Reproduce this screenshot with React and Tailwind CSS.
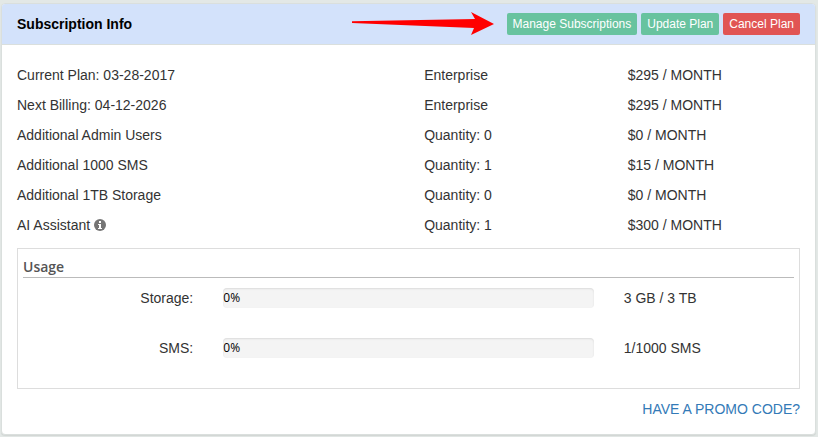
const plans = [
  { name: "Current Plan: 03-28-2017", detail: "Enterprise", price: "$295 / MONTH" },
  { name: "Next Billing: 04-12-2026", detail: "Enterprise", price: "$295 / MONTH" },
  { name: "Additional Admin Users", detail: "Quantity: 0", price: "$0 / MONTH" },
  { name: "Additional 1000 SMS", detail: "Quantity: 1", price: "$15 / MONTH" },
  { name: "Additional 1TB Storage", detail: "Quantity: 0", price: "$0 / MONTH" },
  { name: "AI Assistant", detail: "Quantity: 1", price: "$300 / MONTH", info: true },
];

const usage = [
  { id: "storage", label: "Storage:", percent: 0, value: "3 GB / 3 TB" },
  { id: "sms", label: "SMS:", percent: 0, value: "1/1000 SMS" },
];

function InfoIcon() {
  return (
    <svg viewBox="0 0 12 12" className="inline-block size-3 ml-1 align-[-1px]" aria-hidden="true">
      <circle cx="6" cy="6" r="6" fill="#757575" />
      <path d="M5 2h2v2H5zM4 5h3v4h1v1H4V9h1V6H4z" fill="#fff" />
    </svg>
  );
}

function Arrow() {
  return (
    <svg width="143" height="24" viewBox="0 0 143 24" className="shrink-0 mr-2" aria-hidden="true">
      <path d="M0 9.2L123 7L119 0L142 12L119 23L122 16L0 11z" fill="#f00" />
    </svg>
  );
}

function UsageRow({ id, label, percent, value }) {
  return (
    <div className="grid grid-cols-4 -mx-[15px] h-[50px] leading-5">
      <div id={id} className="px-[15px] text-right">{label}</div>
      <div className="col-span-2 px-[15px]">
        <div
          role="progressbar"
          aria-labelledby={id}
          aria-valuenow={percent}
          className="flex h-5 rounded bg-[#f4f4f4] shadow-[inset_0_1px_2px_rgba(0,0,0,0.1)]"
        >
          <div className="h-full bg-[#68c39f]" style={{ width: `${percent}%` }} />
          <span className="font-['Open_Sans',sans-serif] text-xs font-medium leading-5 text-black">{percent}%</span>
        </div>
      </div>
      <div className="px-[15px]">{value}</div>
    </div>
  );
}

export default function App() {
  return (
    <div className="min-h-screen bg-[#e3e8e6] pt-[3px] pb-0.5 pl-px pr-0.5 font-['Liberation_Sans',Arial,sans-serif] text-sm text-[#333]">
      <section className="rounded border border-[#dadfdd] bg-white shadow-[0_1px_1px_rgba(0,0,0,0.08)]">
        <header className="flex items-center justify-between rounded-t-[3px] border-b border-[#dadfdd] bg-[#d3e2fb] px-[15px] h-[41px]">
          <h1 className="text-sm font-bold text-black">Subscription Info</h1>
          <div className="flex items-center gap-1 text-xs text-white">
            <Arrow />
            <button type="button" className="h-[22px] rounded-[2px] bg-[#68c39f] px-1.5">Manage Subscriptions</button>
            <button type="button" className="h-[22px] rounded-[2px] bg-[#68c39f] px-1.5">Update Plan</button>
            <button type="button" className="h-[22px] rounded-[2px] bg-[#e15554] px-1.5">Cancel Plan</button>
          </div>
        </header>

        <div className="px-[15px] pt-[15px] pb-[15px]">
          <table className="w-full table-fixed">
            <colgroup>
              <col className="w-[52%]" />
              <col className="w-[26%]" />
              <col className="w-[22%]" />
            </colgroup>
            <tbody>
              {plans.map((plan) => (
                <tr key={plan.name} className="h-[30px]">
                  <td>
                    {plan.name}
                    {plan.info && <InfoIcon />}
                  </td>
                  <td>{plan.detail}</td>
                  <td>{plan.price}</td>
                </tr>
              ))}
            </tbody>
          </table>

          <div className="mt-2 border border-[#ddd] px-[5px] pt-2">
            <h2 className="mb-2.5 border-b border-[#bbb] font-['Open_Sans',sans-serif] text-sm font-semibold text-[#555]">Usage</h2>
            {usage.map((item) => (
              <UsageRow key={item.id} {...item} />
            ))}
          </div>

          <div className="mt-2.5 text-right">
            <a href="#promo" className="text-[#337ab7]">HAVE A PROMO CODE?</a>
          </div>
        </div>
      </section>
    </div>
  );
}
